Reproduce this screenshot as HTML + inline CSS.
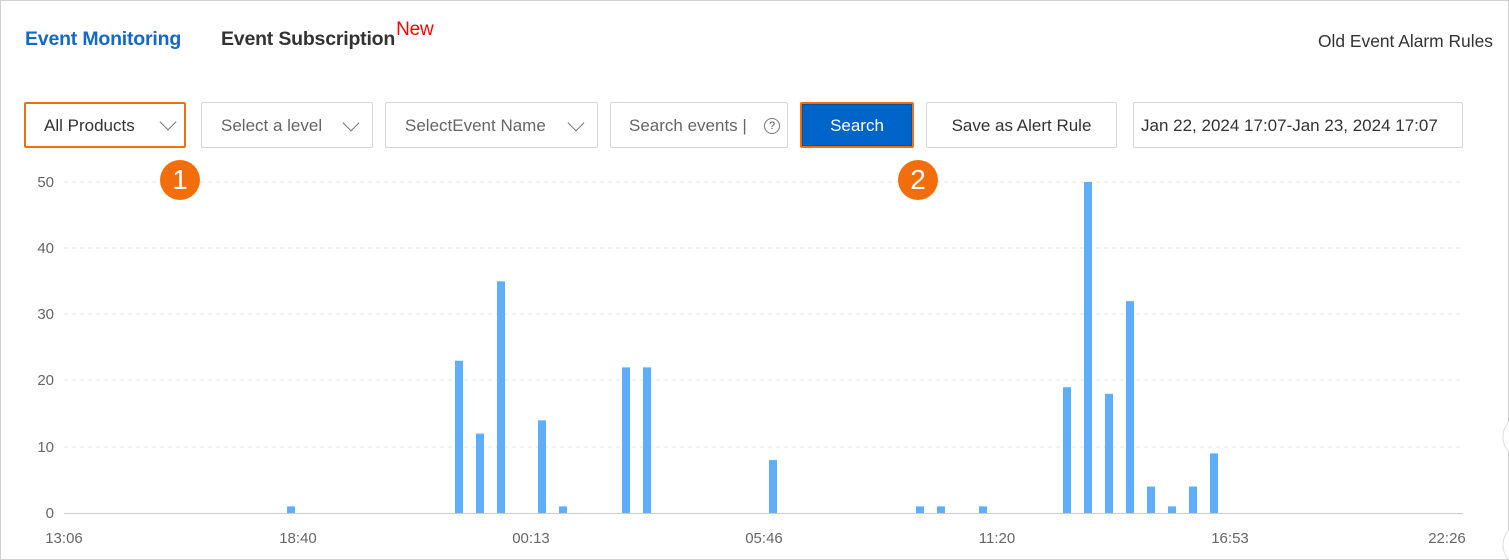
<!DOCTYPE html>
<html><head><meta charset="utf-8"><style>
body{margin:0;width:1509px;height:560px;background:#fff;font-family:"Liberation Sans",sans-serif;position:relative;overflow:hidden}
.frame{position:absolute;left:0;top:0;width:1507px;height:558px;border:1px solid #d0d0d0}
.a{position:absolute;white-space:nowrap}
.box{position:absolute;top:102px;height:46px;border:1px solid #d3d6db;border-radius:2px;box-sizing:border-box;font-size:17px;color:#666;line-height:46px}
.chev{position:absolute;top:14px;width:11px;height:11px;border-right:1.6px solid #777;border-bottom:1.6px solid #777;transform:rotate(45deg)}
.badge{position:absolute;width:40px;height:40px;border-radius:50%;background:#f26e0d;color:#fff;font-size:28px;text-align:center;line-height:40px;z-index:5}
</style></head><body>
<div class="frame"></div>
<svg class="a" style="left:0;top:0" width="1509" height="560">
<g stroke="#e6e6e6" stroke-dasharray="4,4">
<line x1="64" x2="1463" y1="182" y2="182"/><line x1="64" x2="1463" y1="248" y2="248"/><line x1="64" x2="1463" y1="314" y2="314"/><line x1="64" x2="1463" y1="380" y2="380"/><line x1="64" x2="1463" y1="447" y2="447"/>
</g>
<line x1="64" x2="1463" y1="513.5" y2="513.5" stroke="#ccc"/>
<g font-size="15" fill="#666" text-anchor="end" font-family="Liberation Sans">
<text x="54" y="187">50</text><text x="54" y="253">40</text><text x="54" y="319">30</text><text x="54" y="385">20</text><text x="54" y="452">10</text><text x="54" y="518">0</text>
</g>
<g font-size="15" fill="#666" text-anchor="middle" font-family="Liberation Sans">
<text x="64" y="543">13:06</text><text x="298" y="543">18:40</text><text x="531" y="543">00:13</text><text x="764" y="543">05:46</text><text x="997" y="543">11:20</text><text x="1230" y="543">16:53</text><text x="1447" y="543">22:26</text>
</g>
<g fill="#5eaefc" id="bars"></g>
<circle cx="1525" cy="437" r="22" fill="#fff" stroke="#ddd"/>
<circle cx="1525" cy="545" r="22" fill="#fff" stroke="#ddd"/>
</svg>
<div class="a" style="left:25px;top:28px;font-size:19.5px;font-weight:bold;color:#1468c8;letter-spacing:-0.2px">Event Monitoring</div>
<div class="a" style="left:221px;top:28px;font-size:19.5px;font-weight:bold;color:#333;letter-spacing:-0.2px">Event Subscription<span style="color:#f00;font-size:19px;font-weight:normal;position:relative;top:-10px;margin-left:1px">New</span></div>
<div class="a" style="left:1318px;top:31px;font-size:17.4px;color:#333">Old Event Alarm Rules</div>

<div class="box" style="left:24px;width:162px;border:2px solid #f26e0d;color:#333;line-height:44px;padding-left:18px">All Products<div class="chev" style="left:136px;top:12px"></div></div>
<div class="box" style="left:201px;width:172px;padding-left:19px">Select a level<div class="chev" style="left:143px"></div></div>
<div class="box" style="left:385px;width:213px;padding-left:19px">SelectEvent Name<div class="chev" style="left:184px"></div></div>
<div class="box" style="left:610px;width:178px;padding-left:18px">Search events |<div style="position:absolute;left:153px;top:15px;width:14px;height:14px;border:1.3px solid #777;border-radius:50%;font-size:11px;line-height:14px;text-align:center;color:#555">?</div></div>
<div class="box" style="left:800px;width:114px;background:#0064c8;border:2px solid #f26e0d;box-shadow:inset 0 0 0 1px #0052a8;color:#fff;text-align:center;line-height:44px">Search</div>
<div class="box" style="left:926px;width:191px;color:#333;text-align:center">Save as Alert Rule</div>
<div class="box" style="left:1133px;width:330px;color:#333;padding-left:7px">Jan 22, 2024 17:07-Jan 23, 2024 17:07</div>

<div class="badge" style="left:160px;top:160px">1</div>
<div class="badge" style="left:898px;top:160px">2</div>
<script>
var d=[[291,1],[459,23],[480,12],[501,35],[542,14],[563,1],[626,22],[647,22],[773,8],[920,1],[941,1],[983,1],[1067,19],[1088,50],[1109,18],[1130,32],[1151,4],[1172,1],[1193,4],[1214,9]];
var g=document.getElementById('bars'),s='';
d.forEach(function(b){var h=b[1]*6.62;s+='<rect x="'+(b[0]-4)+'" y="'+(513-h)+'" width="8" height="'+h+'"/>';});
g.innerHTML=s;
</script>
</body></html>
